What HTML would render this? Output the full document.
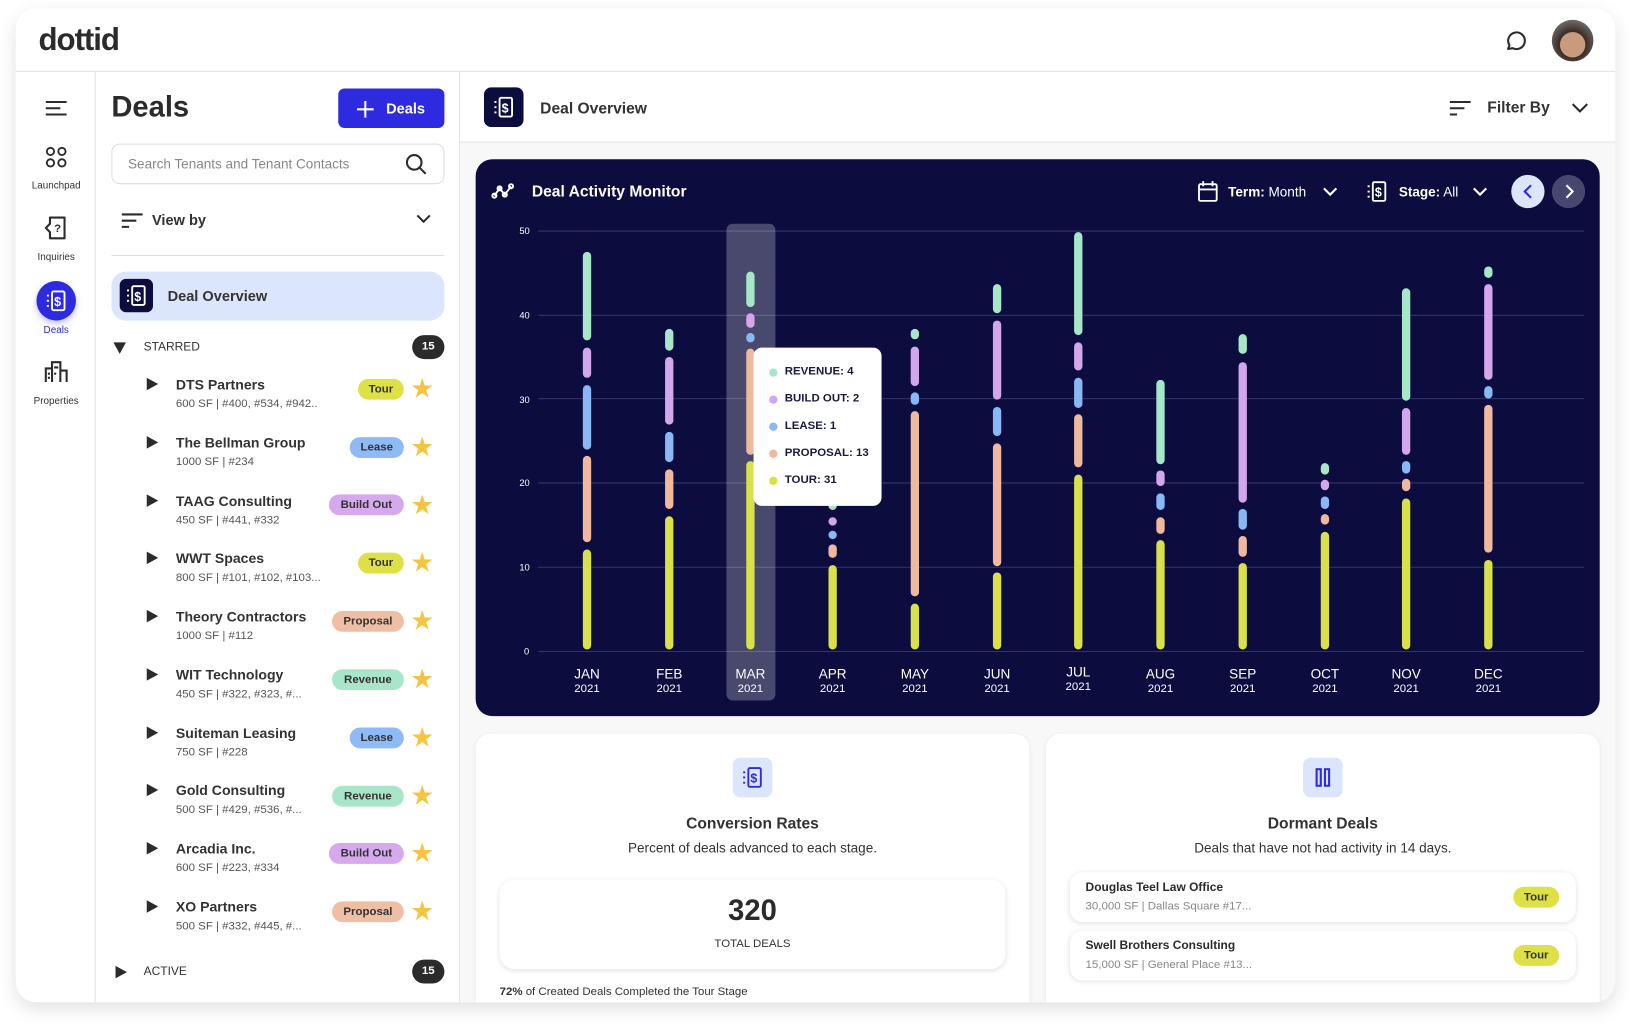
<!DOCTYPE html>
<html><head><meta charset="utf-8">
<style>
*{box-sizing:border-box;margin:0;padding:0}
html,body{width:1632px;height:1027px;overflow:hidden;background:#fff;font-family:"Liberation Sans",sans-serif;color:#2b2b2b}
#s{position:absolute;left:0;top:0;width:1568px;height:987px;transform:scale(1.0408);transform-origin:0 0}
.a{position:absolute}
.card{position:absolute;left:15px;top:8px;width:1537px;height:955px;background:#fff;border-radius:20px;box-shadow:0 6px 18px rgba(0,0,0,.12);overflow:hidden}
.navl{font-size:9.5px;color:#333;text-align:center;width:76px}
.item .t{font-size:13.5px;font-weight:bold;color:#333}
.item .s{font-size:11px;color:#555;margin-top:5px}
.badge{position:absolute;height:20px;border-radius:10px;font-size:11px;font-weight:bold;color:#333;line-height:20px;text-align:center}
.tri{position:absolute;width:0;height:0;border-top:6px solid transparent;border-bottom:6px solid transparent;border-left:11px solid #2b2b2b}
.star{position:absolute;font-size:26px;color:#f4c542;line-height:24px}
.tt{font-size:11px;font-weight:bold;color:#1a1a3e;position:absolute;left:30px}
.dot{position:absolute;left:15px;width:8px;height:8px;border-radius:4px}
</style></head><body><div id="s">
<div class="card">
 <div class="a" style="left:22px;top:14px;font-size:30px;font-weight:bold;letter-spacing:-1px;color:#2b2b2b">dottid</div>
 <svg class="a" style="left:1430px;top:19px" width="24" height="24" viewBox="0 0 24 24" fill="none" stroke="#2b2b2b" stroke-width="2"><path d="M4 20l1.3-3.6A8 8 0 1 1 8.5 19.3z" stroke-linejoin="round"/></svg>
 <div class="a" style="left:1476px;top:11px;width:40px;height:40px;border-radius:20px;background:radial-gradient(circle at 50% 60%,#c99a7c 0 38%,#3a2a22 40%,#6b6b6b 75%)"></div>
 <div class="a" style="left:0;top:60px;width:1537px;height:1px;background:#e2e2e2"></div>
 <div class="a" style="left:76px;top:61px;width:1px;height:900px;background:#e2e2e2"></div>
 <svg class="a" style="left:28px;top:88px" width="22" height="16"><path d="M1 2h20M1 8h14M1 14h20" stroke="#2b2b2b" stroke-width="2"/></svg>
 <svg class="a" style="left:28px;top:132px" width="22" height="22" fill="none" stroke="#2b2b2b" stroke-width="1.8"><circle cx="5.5" cy="5.5" r="3.5"/><circle cx="16.5" cy="5.5" r="3.5"/><circle cx="5.5" cy="16.5" r="3.5"/><circle cx="16.5" cy="16.5" r="3.5"/></svg>
 <div class="a navl" style="left:1px;top:165px">Launchpad</div>
 <svg class="a" style="left:27px;top:199px" width="24" height="24" fill="none" stroke="#2b2b2b" stroke-width="2"><path d="M6 2h14v20H6v-6l-4-4 4-4z" stroke-linejoin="round"/><text x="10" y="16" font-size="11" stroke="none" fill="#2b2b2b" font-family="Liberation Sans" font-weight="bold">?</text></svg>
 <div class="a navl" style="left:1px;top:234px">Inquiries</div>
 <div class="a" style="left:20px;top:262px;width:38px;height:38px;border-radius:19px;background:#2d2ae0;box-shadow:0 3px 6px rgba(45,42,224,.3)"></div>
 <svg class="a" style="left:28px;top:270px" width="22" height="22" fill="none" stroke="#fff" stroke-width="1.8"><rect x="7" y="2" width="12" height="18" rx="1.5"/><path d="M2 6h2M2 11h2M2 16h2"/><text x="9" y="16" font-size="12" font-weight="bold" fill="#fff" stroke="none" font-family="Liberation Sans">$</text></svg>
 <div class="a navl" style="left:1px;top:304px;color:#2d2ae0">Deals</div>
 <svg class="a" style="left:27px;top:338px" width="24" height="22" fill="none" stroke="#2b2b2b" stroke-width="2"><path d="M2 21V8h6v13M8 21V2h8v19M16 21V10h6v11M5 12v2M5 16v2M11 6v2M13 6v2M11 12v2"/></svg>
 <div class="a navl" style="left:1px;top:372px">Properties</div>
 <div class="a" style="left:426px;top:61px;width:1px;height:900px;background:#e2e2e2"></div>
 <div class="a" style="left:92px;top:79px;font-size:28px;font-weight:bold;color:#2b2b2b">Deals</div>
 <div class="a" style="left:310px;top:77px;width:102px;height:38px;border-radius:6px;background:#2d2ae0;color:#fff;font-size:14px;font-weight:bold;line-height:38px;padding-left:46px">Deals</div>
 <svg class="a" style="left:327px;top:88px" width="18" height="18"><path d="M9 1v16M1 9h16" stroke="#fff" stroke-width="2"/></svg>
 <div class="a" style="left:92px;top:130px;width:320px;height:39px;border:1px solid #ddd;border-radius:8px;font-size:13px;color:#888;line-height:37px;padding-left:15px">Search Tenants and Tenant Contacts</div>
 <svg class="a" style="left:374px;top:139px" width="22" height="22" fill="none" stroke="#2b2b2b" stroke-width="2"><circle cx="9" cy="9" r="7"/><path d="M14 14l6 6"/></svg>
 <svg class="a" style="left:101px;top:196px" width="22" height="16"><path d="M1 2h20M1 8h14M1 14h7" stroke="#2b2b2b" stroke-width="2"/></svg>
 <div class="a" style="left:131px;top:195px;font-size:14px;font-weight:bold;color:#333">View by</div>
 <svg class="a" style="left:385px;top:198px" width="14" height="10"><path d="M1 1l6 6 6-6" fill="none" stroke="#2b2b2b" stroke-width="2"/></svg>
 <div class="a" style="left:92px;top:237px;width:320px;height:1px;background:#ddd"></div>
 <div class="a" style="left:92px;top:253px;width:320px;height:47px;border-radius:14px;background:#dbe6fd"></div>
 <div class="a" style="left:100px;top:260px;width:32px;height:32px;border-radius:6px;background:#0c0c3e"></div>
 <svg class="a" style="left:105px;top:265px" width="22" height="22" fill="none" stroke="#fff" stroke-width="1.8"><rect x="7" y="2" width="12" height="18" rx="1.5"/><path d="M2 6h2M2 11h2M2 16h2"/><text x="9" y="16" font-size="12" font-weight="bold" fill="#fff" stroke="none" font-family="Liberation Sans">$</text></svg>
 <div class="a" style="left:146px;top:268px;font-size:14px;font-weight:bold;color:#333">Deal Overview</div>
 <div class="a" style="left:94px;top:321px;width:0;height:0;border-left:6px solid transparent;border-right:6px solid transparent;border-top:11px solid #2b2b2b"></div>
 <div class="a" style="left:123px;top:320px;font-size:11.5px;color:#333">STARRED</div>
 <div class="a" style="left:381px;top:314px;width:31px;height:23px;border-radius:12px;background:#2b2b2b;color:#fff;font-size:11px;font-weight:bold;text-align:center;line-height:23px">15</div>

 <div class="a item" style="left:154px;top:354px"><div class="t">DTS Partners</div><div class="s">600 SF | #400, #534, #942..</div></div>
 <div class="tri" style="left:126px;top:355px"></div><div class="badge" style="left:329px;top:356px;width:44px;background:#dde147">Tour</div><div class="star" style="left:379px;top:353px">★</div>
 <div class="a item" style="left:154px;top:410px"><div class="t">The Bellman Group</div><div class="s">1000 SF | #234</div></div>
 <div class="tri" style="left:126px;top:411px"></div><div class="badge" style="left:321px;top:412px;width:52px;background:#8ebaf6">Lease</div><div class="star" style="left:379px;top:409px">★</div>
 <div class="a item" style="left:154px;top:466px"><div class="t">TAAG Consulting</div><div class="s">450 SF | #441, #332</div></div>
 <div class="tri" style="left:126px;top:467px"></div><div class="badge" style="left:301px;top:467px;width:72px;background:#d6a8ee">Build Out</div><div class="star" style="left:379px;top:465px">★</div>
 <div class="a item" style="left:154px;top:521px"><div class="t">WWT Spaces</div><div class="s">800 SF | #101, #102, #103...</div></div>
 <div class="tri" style="left:126px;top:522px"></div><div class="badge" style="left:329px;top:523px;width:44px;background:#dde147">Tour</div><div class="star" style="left:379px;top:520px">★</div>
 <div class="a item" style="left:154px;top:577px"><div class="t">Theory Contractors</div><div class="s">1000 SF | #112</div></div>
 <div class="tri" style="left:126px;top:578px"></div><div class="badge" style="left:304px;top:579px;width:69px;background:#f0bea5">Proposal</div><div class="star" style="left:379px;top:576px">★</div>
 <div class="a item" style="left:154px;top:633px"><div class="t">WIT Technology</div><div class="s">450 SF | #322, #323, #...</div></div>
 <div class="tri" style="left:126px;top:634px"></div><div class="badge" style="left:304px;top:635px;width:69px;background:#a9e6c9">Revenue</div><div class="star" style="left:379px;top:632px">★</div>
 <div class="a item" style="left:154px;top:689px"><div class="t">Suiteman Leasing</div><div class="s">750 SF | #228</div></div>
 <div class="tri" style="left:126px;top:690px"></div><div class="badge" style="left:321px;top:691px;width:52px;background:#8ebaf6">Lease</div><div class="star" style="left:379px;top:688px">★</div>
 <div class="a item" style="left:154px;top:744px"><div class="t">Gold Consulting</div><div class="s">500 SF | #429, #536, #...</div></div>
 <div class="tri" style="left:126px;top:745px"></div><div class="badge" style="left:304px;top:747px;width:69px;background:#a9e6c9">Revenue</div><div class="star" style="left:379px;top:744px">★</div>
 <div class="a item" style="left:154px;top:800px"><div class="t">Arcadia Inc.</div><div class="s">600 SF | #223, #334</div></div>
 <div class="tri" style="left:126px;top:801px"></div><div class="badge" style="left:301px;top:802px;width:72px;background:#d6a8ee">Build Out</div><div class="star" style="left:379px;top:799px">★</div>
 <div class="a item" style="left:154px;top:856px"><div class="t">XO Partners</div><div class="s">500 SF | #332, #445, #...</div></div>
 <div class="tri" style="left:126px;top:857px"></div><div class="badge" style="left:304px;top:858px;width:69px;background:#f0bea5">Proposal</div><div class="star" style="left:379px;top:855px">★</div>

 <div class="tri" style="left:96px;top:920px"></div>
 <div class="a" style="left:123px;top:920px;font-size:11.5px;color:#333">ACTIVE</div>
 <div class="a" style="left:381px;top:914px;width:31px;height:23px;border-radius:12px;background:#2b2b2b;color:#fff;font-size:11px;font-weight:bold;text-align:center;line-height:23px">15</div>

 <div class="a" style="left:427px;top:129px;width:1110px;height:830px;background:#f8f8f8"></div>
 <div class="a" style="left:427px;top:128px;width:1110px;height:1px;background:#e2e2e2"></div>
 <div class="a" style="left:450px;top:76px;width:38px;height:38px;border-radius:7px;background:#0c0c3e"></div>
 <svg class="a" style="left:458px;top:84px" width="22" height="22" fill="none" stroke="#fff" stroke-width="1.8"><rect x="7" y="2" width="12" height="18" rx="1.5"/><path d="M2 6h2M2 11h2M2 16h2"/><text x="9" y="16" font-size="12" font-weight="bold" fill="#fff" stroke="none" font-family="Liberation Sans">$</text></svg>
 <div class="a" style="left:504px;top:88px;font-size:15px;font-weight:bold;color:#333">Deal Overview</div>
 <svg class="a" style="left:1377px;top:88px" width="22" height="16"><path d="M1 2h20M1 8h14M1 14h7" stroke="#2b2b2b" stroke-width="2"/></svg>
 <div class="a" style="left:1414px;top:87px;font-size:15px;font-weight:bold;color:#333">Filter By</div>
 <svg class="a" style="left:1495px;top:91px" width="16" height="11"><path d="M1 1l7 7 7-7" fill="none" stroke="#2b2b2b" stroke-width="2"/></svg>

 <div class="a" style="left:442px;top:145px;width:1080px;height:535px;border-radius:16px;background:#0c0c3e;overflow:hidden">
  <svg class="a" style="left:0;top:0" width="1080" height="535" font-family="Liberation Sans">
   <g stroke="#34346a" stroke-width="1">
    <line x1="60" x2="1065" y1="69" y2="69"/><line x1="60" x2="1065" y1="150" y2="150"/><line x1="60" x2="1065" y1="230" y2="230"/><line x1="60" x2="1065" y1="311" y2="311"/><line x1="60" x2="1065" y1="392" y2="392"/><line x1="60" x2="1065" y1="473" y2="473"/>
   </g>
   <g fill="#fff" font-size="9" text-anchor="middle"><text x="47" y="72">50</text><text x="47" y="153">40</text><text x="47" y="234">30</text><text x="47" y="314">20</text><text x="47" y="395">10</text><text x="49" y="476">0</text></g>
   <rect x="241" y="62" width="47" height="458" rx="6" fill="#fff" fill-opacity=".25"/>
   <g stroke-width="8" stroke-linecap="round">
    <g transform="translate(-457,-153)">
    <line x1="564" x2="564" y1="246" y2="323" stroke="#a8e6c8"/><line x1="564" x2="564" y1="338" y2="359" stroke="#d4a6ec"/><line x1="564" x2="564" y1="374" y2="428" stroke="#8ab8f5"/><line x1="564" x2="564" y1="442" y2="517" stroke="#efb9a0"/><line x1="564" x2="564" y1="532" y2="620" stroke="#d8e04a"/>
    <line x1="643" x2="643" y1="320" y2="333" stroke="#a8e6c8"/><line x1="643" x2="643" y1="347" y2="404" stroke="#d4a6ec"/><line x1="643" x2="643" y1="419" y2="440" stroke="#8ab8f5"/><line x1="643" x2="643" y1="455" y2="485" stroke="#efb9a0"/><line x1="643" x2="643" y1="500" y2="620" stroke="#d8e04a"/>
    <line x1="721" x2="721" y1="265" y2="291" stroke="#a8e6c8"/><line x1="721" x2="721" y1="305" y2="311" stroke="#d4a6ec"/><line x1="721" x2="721" y1="324" y2="325" stroke="#8ab8f5"/><line x1="721" x2="721" y1="339" y2="433" stroke="#efb9a0"/><line x1="721" x2="721" y1="447" y2="620" stroke="#d8e04a"/>
    <line x1="800" x2="800" y1="479" y2="486" stroke="#a8e6c8"/><line x1="800" x2="800" y1="501" y2="501" stroke="#d4a6ec"/><line x1="800" x2="800" y1="514" y2="514" stroke="#8ab8f5"/><line x1="800" x2="800" y1="527" y2="532" stroke="#efb9a0"/><line x1="800" x2="800" y1="547" y2="620" stroke="#d8e04a"/>
    <line x1="879" x2="879" y1="320" y2="322" stroke="#a8e6c8"/><line x1="879" x2="879" y1="337" y2="367" stroke="#d4a6ec"/><line x1="879" x2="879" y1="381" y2="385" stroke="#8ab8f5"/><line x1="879" x2="879" y1="399" y2="569" stroke="#efb9a0"/><line x1="879" x2="879" y1="584" y2="620" stroke="#d8e04a"/>
    <line x1="958" x2="958" y1="277" y2="297" stroke="#a8e6c8"/><line x1="958" x2="958" y1="312" y2="380" stroke="#d4a6ec"/><line x1="958" x2="958" y1="395" y2="415" stroke="#8ab8f5"/><line x1="958" x2="958" y1="430" y2="540" stroke="#efb9a0"/><line x1="958" x2="958" y1="554" y2="620" stroke="#d8e04a"/>
    <line x1="1036" x2="1036" y1="227" y2="318" stroke="#a8e6c8"/><line x1="1036" x2="1036" y1="333" y2="352" stroke="#d4a6ec"/><line x1="1036" x2="1036" y1="367" y2="388" stroke="#8ab8f5"/><line x1="1036" x2="1036" y1="402" y2="445" stroke="#efb9a0"/><line x1="1036" x2="1036" y1="460" y2="620" stroke="#d8e04a"/>
    <line x1="1115" x2="1115" y1="369" y2="442" stroke="#a8e6c8"/><line x1="1115" x2="1115" y1="456" y2="463" stroke="#d4a6ec"/><line x1="1115" x2="1115" y1="478" y2="486" stroke="#8ab8f5"/><line x1="1115" x2="1115" y1="501" y2="509" stroke="#efb9a0"/><line x1="1115" x2="1115" y1="523" y2="620" stroke="#d8e04a"/>
    <line x1="1194" x2="1194" y1="325" y2="336" stroke="#a8e6c8"/><line x1="1194" x2="1194" y1="352" y2="479" stroke="#d4a6ec"/><line x1="1194" x2="1194" y1="493" y2="505" stroke="#8ab8f5"/><line x1="1194" x2="1194" y1="519" y2="531" stroke="#efb9a0"/><line x1="1194" x2="1194" y1="545" y2="620" stroke="#d8e04a"/>
    <line x1="1273" x2="1273" y1="449" y2="452" stroke="#a8e6c8"/><line x1="1273" x2="1273" y1="465" y2="467" stroke="#d4a6ec"/><line x1="1273" x2="1273" y1="481" y2="485" stroke="#8ab8f5"/><line x1="1273" x2="1273" y1="498" y2="500" stroke="#efb9a0"/><line x1="1273" x2="1273" y1="515" y2="620" stroke="#d8e04a"/>
    <line x1="1351" x2="1351" y1="281" y2="381" stroke="#a8e6c8"/><line x1="1351" x2="1351" y1="396" y2="433" stroke="#d4a6ec"/><line x1="1351" x2="1351" y1="447" y2="451" stroke="#8ab8f5"/><line x1="1351" x2="1351" y1="464" y2="468" stroke="#efb9a0"/><line x1="1351" x2="1351" y1="483" y2="620" stroke="#d8e04a"/>
    <line x1="1430" x2="1430" y1="260" y2="263" stroke="#a8e6c8"/><line x1="1430" x2="1430" y1="277" y2="361" stroke="#d4a6ec"/><line x1="1430" x2="1430" y1="375" y2="379" stroke="#8ab8f5"/><line x1="1430" x2="1430" y1="393" y2="527" stroke="#efb9a0"/><line x1="1430" x2="1430" y1="542" y2="620" stroke="#d8e04a"/>
    </g>
   </g>
   <g fill="#fff" text-anchor="middle" font-size="13"><text x="107" y="499">JAN</text><text x="186" y="499">FEB</text><text x="264" y="499">MAR</text><text x="343" y="499">APR</text><text x="422" y="499">MAY</text><text x="501" y="499">JUN</text><text x="579" y="497">JUL</text><text x="658" y="499">AUG</text><text x="737" y="499">SEP</text><text x="816" y="499">OCT</text><text x="894" y="499">NOV</text><text x="973" y="499">DEC</text></g>
   <g fill="#fff" text-anchor="middle" font-size="11"><text x="107" y="512">2021</text><text x="186" y="512">2021</text><text x="264" y="512">2021</text><text x="343" y="512">2021</text><text x="422" y="512">2021</text><text x="501" y="512">2021</text><text x="579" y="510">2021</text><text x="658" y="512">2021</text><text x="737" y="512">2021</text><text x="816" y="512">2021</text><text x="894" y="512">2021</text><text x="973" y="512">2021</text></g>
  </svg>
  <svg class="a" style="left:15px;top:23px" width="24" height="16" fill="none" stroke="#fff" stroke-width="1.8"><path d="M3 12l5-7 5 6 6-8"/><circle cx="3" cy="12" r="2"/><circle cx="8" cy="5" r="2"/><circle cx="13" cy="11" r="2"/><circle cx="19" cy="3" r="2"/></svg>
  <div class="a" style="left:54px;top:23px;font-size:15px;font-weight:bold;color:#fff">Deal Activity Monitor</div>
  <svg class="a" style="left:693px;top:20px" width="22" height="22" fill="none" stroke="#fff" stroke-width="1.8"><rect x="2" y="4" width="17" height="16" rx="1.5"/><path d="M2 9h17M6 1v5M15 1v5"/></svg>
  <div class="a" style="left:723px;top:24px;font-size:13px;color:#fff"><b>Term:</b> Month</div>
  <svg class="a" style="left:814px;top:27px" width="14" height="9"><path d="M1 1l6 6 6-6" fill="none" stroke="#fff" stroke-width="2"/></svg>
  <svg class="a" style="left:855px;top:20px" width="22" height="22" fill="none" stroke="#fff" stroke-width="1.8"><rect x="7" y="2" width="12" height="18" rx="1.5"/><path d="M2 6h2M2 11h2M2 16h2"/><text x="9" y="16" font-size="12" font-weight="bold" fill="#fff" stroke="none" font-family="Liberation Sans">$</text></svg>
  <div class="a" style="left:887px;top:24px;font-size:13px;color:#fff"><b>Stage:</b> All</div>
  <svg class="a" style="left:958px;top:27px" width="14" height="9"><path d="M1 1l6 6 6-6" fill="none" stroke="#fff" stroke-width="2"/></svg>
  <div class="a" style="left:995px;top:15px;width:32px;height:32px;border-radius:16px;background:#dbe6fd"></div>
  <svg class="a" style="left:1005px;top:23px" width="12" height="16"><path d="M9 2L3 8l6 6" fill="none" stroke="#2d2ae0" stroke-width="2"/></svg>
  <div class="a" style="left:1034px;top:15px;width:32px;height:32px;border-radius:16px;background:#46466e"></div>
  <svg class="a" style="left:1045px;top:23px" width="12" height="16"><path d="M3 2l6 6-6 6" fill="none" stroke="#fff" stroke-width="2"/></svg>
  <div class="a" style="left:267px;top:181px;width:123px;height:152px;border-radius:8px;background:#fff">
   <div class="dot" style="top:20px;background:#a8e6c8"></div><div class="tt" style="top:17px">REVENUE: 4</div>
   <div class="dot" style="top:46px;background:#d4a6ec"></div><div class="tt" style="top:43px">BUILD OUT: 2</div>
   <div class="dot" style="top:72px;background:#8ab8f5"></div><div class="tt" style="top:69px">LEASE: 1</div>
   <div class="dot" style="top:98px;background:#efb9a0"></div><div class="tt" style="top:95px">PROPOSAL: 13</div>
   <div class="dot" style="top:124px;background:#d8e04a"></div><div class="tt" style="top:121px">TOUR: 31</div>
  </div>
 </div>

 <div class="a" style="left:442px;top:697px;width:532px;height:280px;border-radius:14px;background:#fff;box-shadow:0 1px 4px rgba(0,0,0,.08)">
  <div class="a" style="left:247px;top:23px;width:38px;height:38px;border-radius:7px;background:#dbe6fd"></div>
  <svg class="a" style="left:255px;top:31px" width="22" height="22" fill="none" stroke="#2d2ae0" stroke-width="1.8"><rect x="7" y="2" width="12" height="18" rx="1.5"/><path d="M2 6h2M2 11h2M2 16h2"/><text x="9" y="16" font-size="12" font-weight="bold" fill="#2d2ae0" stroke="none" font-family="Liberation Sans">$</text></svg>
  <div class="a" style="left:0;top:78px;width:532px;text-align:center;font-size:15px;font-weight:bold;color:#333">Conversion Rates</div>
  <div class="a" style="left:0;top:102px;width:532px;text-align:center;font-size:13px;color:#333">Percent of deals advanced to each stage.</div>
  <div class="a" style="left:23px;top:140px;width:486px;height:86px;border-radius:14px;background:#fff;box-shadow:0 1px 5px rgba(0,0,0,.12)">
   <div class="a" style="left:0;top:14px;width:486px;text-align:center;font-size:28px;font-weight:bold;color:#2b2b2b">320</div>
   <div class="a" style="left:0;top:56px;width:486px;text-align:center;font-size:11px;color:#333">TOTAL DEALS</div>
  </div>
  <div class="a" style="left:23px;top:242px;font-size:11px;color:#333"><b>72%</b> of Created Deals Completed the Tour Stage</div>
 </div>
 <div class="a" style="left:990px;top:697px;width:532px;height:280px;border-radius:14px;background:#fff;box-shadow:0 1px 4px rgba(0,0,0,.08)">
  <div class="a" style="left:247px;top:23px;width:38px;height:38px;border-radius:7px;background:#dbe6fd"></div>
  <svg class="a" style="left:257px;top:33px" width="18" height="18" fill="none" stroke="#2d2ae0" stroke-width="2"><rect x="3" y="1" width="4" height="16"/><rect x="11" y="1" width="4" height="16"/></svg>
  <div class="a" style="left:0;top:78px;width:532px;text-align:center;font-size:15px;font-weight:bold;color:#333">Dormant Deals</div>
  <div class="a" style="left:0;top:102px;width:532px;text-align:center;font-size:13px;color:#333">Deals that have not had activity in 14 days.</div>
  <div class="a" style="left:23px;top:133px;width:486px;height:48px;border-radius:12px;background:#fff;box-shadow:0 1px 5px rgba(0,0,0,.12)">
   <div class="a" style="left:15px;top:9px;font-size:11.5px;font-weight:bold;color:#2b2b2b">Douglas Teel Law Office</div>
   <div class="a" style="left:15px;top:27px;font-size:11px;color:#888">30,000 SF | Dallas Square #17...</div>
   <div class="badge" style="left:426px;top:14px;width:44px;background:#dde147">Tour</div>
  </div>
  <div class="a" style="left:23px;top:189px;width:486px;height:48px;border-radius:12px;background:#fff;box-shadow:0 1px 5px rgba(0,0,0,.12)">
   <div class="a" style="left:15px;top:9px;font-size:11.5px;font-weight:bold;color:#2b2b2b">Swell Brothers Consulting</div>
   <div class="a" style="left:15px;top:27px;font-size:11px;color:#888">15,000 SF | General Place #13...</div>
   <div class="badge" style="left:426px;top:14px;width:44px;background:#dde147">Tour</div>
  </div>
 </div>
</div>
</div></body></html>
